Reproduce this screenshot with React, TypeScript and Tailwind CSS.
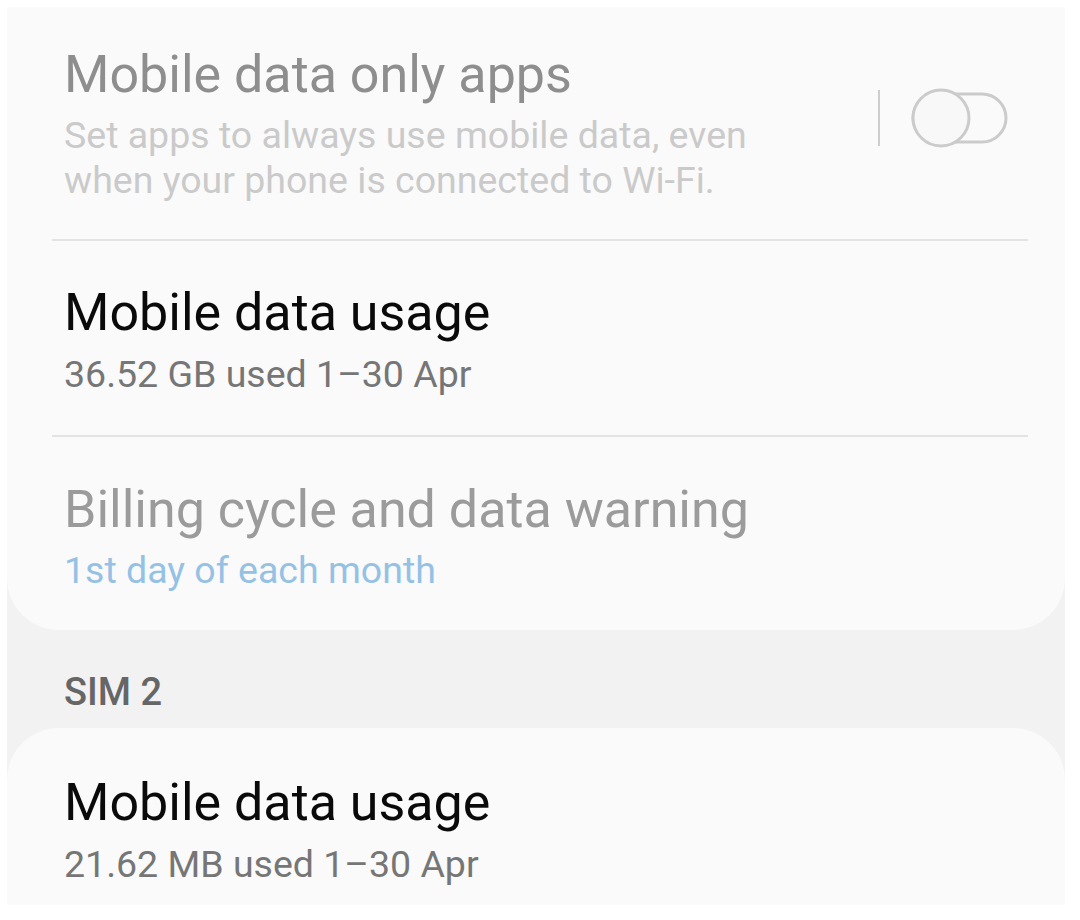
import React from 'react'

const font = { fontFamily: 'Roboto, "Noto Sans", sans-serif' }

function Toggle() {
  return (
    <div className="mt-[42px] flex items-center gap-[30px]">
      <div className="w-[2px] h-[56px] bg-[#cdcdcd]" />
      <svg width="100" height="62" viewBox="0 0 100 62">
        <rect x="3" y="7" width="93" height="48" rx="24" fill="none" stroke="#cbcbcb" strokeWidth="3" />
        <circle cx="31" cy="31" r="28" fill="#f8f8f8" stroke="#cbcbcb" strokeWidth="3" />
      </svg>
    </div>
  )
}

function Divider() {
  return <div className="ml-[45px] mr-[37px] h-[2px] bg-[#e3e3e3]" />
}

export default function App() {
  return (
    <div className="w-[1080px] h-[920px] bg-white pl-[7px] pt-[7px] pr-[15px] pb-[15px]" style={font}>
      <div className="h-full flex flex-col bg-[#f2f2f2] overflow-hidden">
        {/* SIM 1 card */}
        <div className="bg-[#fafafa] rounded-b-[52px]">
          {/* Mobile data only apps (disabled) */}
          <div className="flex items-start pl-[57px] pr-[55px] pt-[38px] pb-[36px]">
            <div className="flex-1">
              <div className="text-[52px] leading-[60px] text-[#8e8e8e]">Mobile data only apps</div>
              <div className="mt-[8px] text-[37.5px] leading-[45px] text-[#cacaca] w-[720px]">
                Set apps to always use mobile data, even when your phone is connected to Wi-Fi.
              </div>
            </div>
            <Toggle />
          </div>
          <Divider />

          <div className="pl-[57px] pt-[42px] pb-[38px]">
            <div className="text-[52px] leading-[60px] text-[#0a0a0a]">Mobile data usage</div>
            <div className="mt-[9px] text-[37.5px] leading-[45px] text-[#767676]">36.52 GB used 1–30 Apr</div>
          </div>
          <Divider />

          <div className="pl-[57px] pt-[43px] pb-[37px]">
            <div className="text-[52px] leading-[60px] text-[#9b9b9b]">Billing cycle and data warning</div>
            <div className="mt-[8px] text-[37.5px] leading-[45px] text-[#94c1e4]">1st day of each month</div>
          </div>
        </div>

        {/* SIM 2 header */}
        <div className="pl-[57px] h-[98px] pt-[40px]">
          <div className="text-[38px] leading-[45px] font-medium text-[#666666]">SIM 2</div>
        </div>

        {/* SIM 2 card */}
        <div className="flex-1 bg-[#fafafa] rounded-t-[52px] pl-[57px] pt-[45px]">
          <div className="text-[52px] leading-[60px] text-[#0a0a0a]">Mobile data usage</div>
          <div className="mt-[9px] text-[37.5px] leading-[45px] text-[#767676]">21.62 MB used 1–30 Apr</div>
        </div>
      </div>
    </div>
  )
}
